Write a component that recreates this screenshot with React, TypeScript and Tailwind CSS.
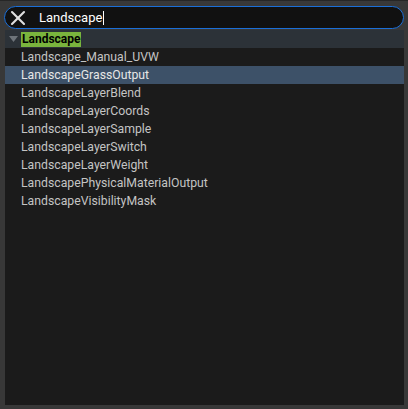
import { X } from "lucide-react";

const items = [
  "Landscape_Manual_UVW",
  "LandscapeGrassOutput",
  "LandscapeLayerBlend",
  "LandscapeLayerCoords",
  "LandscapeLayerSample",
  "LandscapeLayerSwitch",
  "LandscapeLayerWeight",
  "LandscapePhysicalMaterialOutput",
  "LandscapeVisibilityMask",
];

const selected = "LandscapeGrassOutput";

export default function App() {
  return (
    <div
      className="w-[408px] h-[409px] bg-[#383838] border-t border-[#262626] flex flex-col px-[4px] pt-[5px] pb-[4px] overflow-hidden"
      style={{ fontFamily: "Roboto, 'Noto Sans', sans-serif" }}
    >
      {/* search box */}
      <div className="h-[23px] rounded-full bg-[#111111] border border-[#1b6fd8] flex items-center pl-[1px]">
        <X className="w-[24px] h-[24px] text-[#e0e0e0]" strokeWidth={2.1} />
        <span className="ml-[9px] text-[13px] text-white leading-none">Landscape</span>
        <span className="w-px h-[14px] bg-white ml-px" />
      </div>

      {/* results */}
      <div className="mt-[1px] ml-px flex-1 bg-[#1b1b1b] flex flex-col">
        <div className="h-[18px] bg-[#2c3238] flex items-center">
          <svg width="10" height="8" viewBox="0 0 10 8" className="ml-[4px]">
            <polygon points="0,1 9,1 4.5,7" fill="#6e747a" />
          </svg>
          <span className="ml-[2px] bg-[#7ab43d] text-black font-bold text-[12px] leading-[15px] px-px">
            Landscape
          </span>
        </div>
        {items.map((name) => (
          <div
            key={name}
            className={
              "h-[18px] flex items-center pl-[16px] text-[12.25px] " +
              (name === selected ? "bg-[#3d5168] text-[#e6e6e6]" : "text-[#c4c4c4]")
            }
          >
            {name}
          </div>
        ))}
      </div>
    </div>
  );
}
